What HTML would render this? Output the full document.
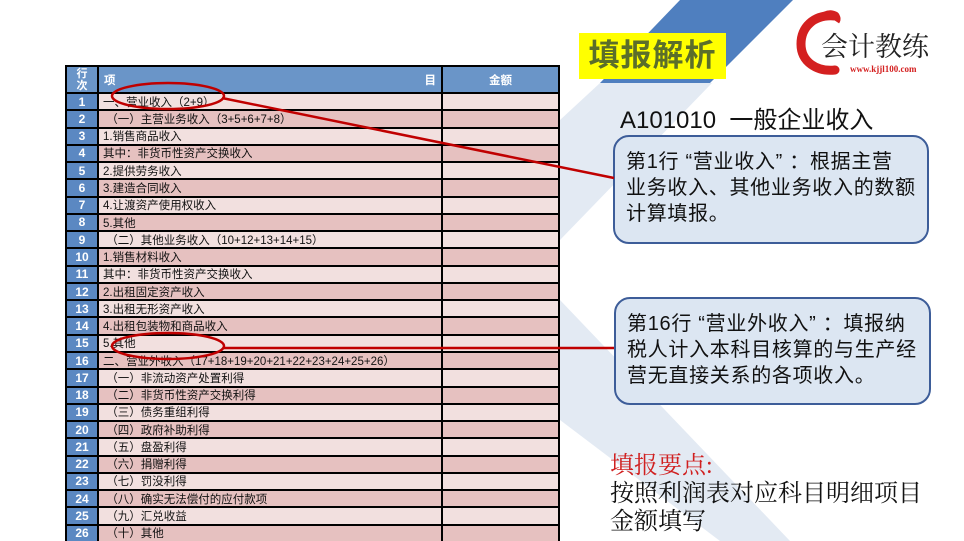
<!DOCTYPE html>
<html><head><meta charset="utf-8"><style>
*{margin:0;padding:0;box-sizing:border-box}
body{width:964px;height:541px;overflow:hidden;background:#fff;position:relative;font-family:"Liberation Sans","Noto Sans CJK SC",sans-serif}
.abs{position:absolute}
#tbl{position:absolute;left:65px;top:65px;width:495px;height:476px;overflow:hidden;background:#000;padding:2px 2px 0 2px;display:grid;grid-template-columns:30px 342px 1fr;grid-template-rows:25px;grid-auto-rows:15.27px;gap:2px;font-size:11.5px;color:#111}
#tbl div{display:flex;align-items:center;white-space:nowrap;overflow:hidden}
.n{background:#5b88c2;color:#fff;font-weight:bold;justify-content:center;font-size:12px}
.h{background:#6a95c8;color:#fff;font-weight:bold}
.o{background:#f2e0df}
.e{background:#e6c1c0}
.t{padding-left:4px}
.box{position:absolute;background:#dce6f2;border:2px solid #3d5d99;border-radius:16px;font-size:20px;letter-spacing:0.7px;line-height:26px;color:#111;padding:12px 0 0 11px;white-space:nowrap}
</style></head><body>
<svg class="abs" style="left:0;top:0" width="964" height="541">
<polygon points="680,0 793,0 710,83 600,83" fill="#4f7fbf"/>
<polygon points="600,83 712,83 560,240 560,120" fill="#e3eaf3"/>
<polygon points="560,300 560,420 720,541 790,541" fill="#e3eaf3"/>
</svg>
<div id="tbl">
<div class="h" style="font-size:11px;line-height:12px;justify-content:center;text-align:center">行<br>次</div>
<div class="h" style="justify-content:space-between;padding:0 5px">项<span>目</span></div>
<div class="h" style="justify-content:center">金额</div>
<div class="n">1</div><div class="o t">一、营业收入（2+9）</div><div class="o"></div>
<div class="n">2</div><div class="e t">&nbsp;（一）主营业务收入（3+5+6+7+8）</div><div class="e"></div>
<div class="n">3</div><div class="o t">1.销售商品收入</div><div class="o"></div>
<div class="n">4</div><div class="e t">其中：非货币性资产交换收入</div><div class="e"></div>
<div class="n">5</div><div class="o t">2.提供劳务收入</div><div class="o"></div>
<div class="n">6</div><div class="e t">3.建造合同收入</div><div class="e"></div>
<div class="n">7</div><div class="o t">4.让渡资产使用权收入</div><div class="o"></div>
<div class="n">8</div><div class="e t">5.其他</div><div class="e"></div>
<div class="n">9</div><div class="o t">&nbsp;（二）其他业务收入（10+12+13+14+15）</div><div class="o"></div>
<div class="n">10</div><div class="e t">1.销售材料收入</div><div class="e"></div>
<div class="n">11</div><div class="o t">其中：非货币性资产交换收入</div><div class="o"></div>
<div class="n">12</div><div class="e t">2.出租固定资产收入</div><div class="e"></div>
<div class="n">13</div><div class="o t">3.出租无形资产收入</div><div class="o"></div>
<div class="n">14</div><div class="e t">4.出租包装物和商品收入</div><div class="e"></div>
<div class="n">15</div><div class="o t">5.其他</div><div class="o"></div>
<div class="n">16</div><div class="e t">二、营业外收入（17+18+19+20+21+22+23+24+25+26）</div><div class="e"></div>
<div class="n">17</div><div class="o t">&nbsp;（一）非流动资产处置利得</div><div class="o"></div>
<div class="n">18</div><div class="e t">&nbsp;（二）非货币性资产交换利得</div><div class="e"></div>
<div class="n">19</div><div class="o t">&nbsp;（三）债务重组利得</div><div class="o"></div>
<div class="n">20</div><div class="e t">&nbsp;（四）政府补助利得</div><div class="e"></div>
<div class="n">21</div><div class="o t">&nbsp;（五）盘盈利得</div><div class="o"></div>
<div class="n">22</div><div class="e t">&nbsp;（六）捐赠利得</div><div class="e"></div>
<div class="n">23</div><div class="o t">&nbsp;（七）罚没利得</div><div class="o"></div>
<div class="n">24</div><div class="e t">&nbsp;（八）确实无法偿付的应付款项</div><div class="e"></div>
<div class="n">25</div><div class="o t">&nbsp;（九）汇兑收益</div><div class="o"></div>
<div class="n">26</div><div class="e t">&nbsp;（十）其他</div><div class="e"></div>
</div>
<div class="abs" style="left:579px;top:33px;width:147px;height:46px;background:#ffff00;color:#5b6e2a;font-size:31px;font-weight:bold;line-height:46px;text-align:center;letter-spacing:1px">填报解析</div>
<svg class="abs" style="left:795px;top:10px" width="150" height="70">
<path d="M40,6 C18,4 6,18 6,34 C6,52 22,62 40,60" fill="none" stroke="#d42020" stroke-width="9" stroke-linecap="round"/>
<path d="M30,4 C38,0 46,6 42,12" fill="none" stroke="#d42020" stroke-width="5"/>
<text x="26" y="46" font-family="Noto Serif CJK SC, serif" font-size="27" fill="#222">会计教练</text>
<text x="55" y="62" font-family="Liberation Serif, serif" font-size="9" font-weight="bold" fill="#d42020">www.kjjl100.com</text>
</svg>
<div class="abs" style="left:620px;top:100px;font-size:24px;color:#111">A101010&nbsp; 一般企业收入</div>
<div class="box" style="left:613px;top:135px;width:316px;height:109px">第1行 “营业收入” ：根据主营<br>业务收入、其他业务收入的数额<br>计算填报。</div>
<div class="box" style="left:614px;top:297px;width:317px;height:108px">第16行 “营业外收入” ：填报纳<br>税人计入本科目核算的与生产经<br>营无直接关系的各项收入。</div>
<div class="abs" style="left:610px;top:452px;font-size:24px;line-height:28px;color:#111;font-family:'Liberation Serif','Noto Serif CJK SC',serif;white-space:nowrap"><span style="color:#d02020">填报要点:</span><br>按照利润表对应科目明细项目<br>金额填写</div>
<svg class="abs" style="left:0;top:0" width="964" height="541">
<ellipse cx="168" cy="96" rx="56" ry="13" fill="none" stroke="#c00000" stroke-width="2.5"/>
<line x1="222" y1="98" x2="614" y2="178" stroke="#c00000" stroke-width="2.5"/>
<ellipse cx="168" cy="346" rx="56" ry="13" fill="none" stroke="#c00000" stroke-width="2.5"/>
<line x1="224" y1="348" x2="614" y2="348" stroke="#c00000" stroke-width="2.5"/>
</svg>
</body></html>
